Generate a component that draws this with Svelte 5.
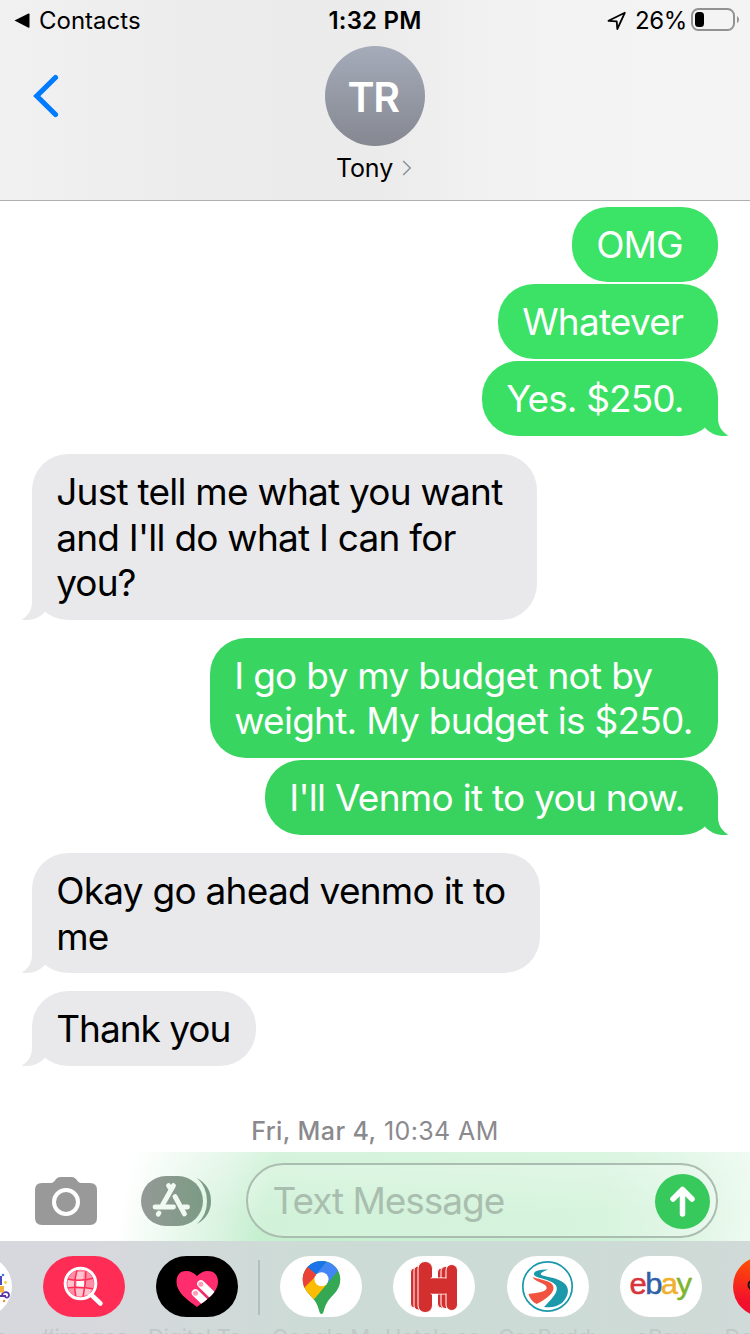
<script lang="ts">
    type Line = { text: string; tracking: number };
    type Message = { from: "me" | "them"; width: number; color?: string; last: boolean; lines: Line[] };

    const messages: Message[] = [
        { from: "me", width: 146, color: "#3be366", last: false, lines: [{ text: "OMG", tracking: -0.9 }] },
        { from: "me", width: 220, color: "#3be265", last: false, lines: [{ text: "Whatever", tracking: -0.8 }] },
        { from: "me", width: 236, color: "#3ae064", last: true, lines: [{ text: "Yes. $250.", tracking: -0.9 }] },
        {
            from: "them",
            width: 505,
            last: true,
            lines: [
                { text: "Just tell me what you want", tracking: -0.76 },
                { text: "and I'll do what I can for", tracking: -0.76 },
                { text: "you?", tracking: -0.9 },
            ],
        },
        {
            from: "me",
            width: 508,
            color: "#38d660",
            last: false,
            lines: [
                { text: "I go by my budget not by", tracking: -0.7 },
                { text: "weight. My budget is $250.", tracking: -0.73 },
            ],
        },
        { from: "me", width: 453, color: "#38d25e", last: true, lines: [{ text: "I'll Venmo it to you now.", tracking: -0.72 }] },
        {
            from: "them",
            width: 508,
            last: true,
            lines: [
                { text: "Okay go ahead venmo it to", tracking: -0.74 },
                { text: "me", tracking: -0.9 },
            ],
        },
        { from: "them", width: 224, last: true, lines: [{ text: "Thank you", tracking: -1.02 }] },
    ];

    const recentApps = [
        { id: "party", label: "Games" },
        { id: "images", label: "#images" },
        { id: "touch", label: "Digital To..." },
    ];

    const apps = [
        { id: "maps", label: "Google M..." },
        { id: "hotels", label: "Hotels.co..." },
        { id: "gas", label: "GasBuddy" },
        { id: "ebay", label: "eBay" },
        { id: "red", label: "DoorDash" },
    ];
</script>

{#snippet appIcon(id: string)}
    <svg viewBox="0 0 82 61" width="82" height="61">
        {#if id === "party"}
            <rect width="82" height="61" rx="30.5" fill="#fff" />
            <path d="M66 40h10M72 40c0-5 7-5 7-1s-5 3-4 0" fill="none" stroke="#5b35a8" stroke-width="1.800" />
            <rect x="66" y="30" width="8" height="6.500" fill="#f7b23c" />
            <path d="M70 20h2v9h-5v-3h3z" fill="#4a49c0" />
            <circle cx="73" cy="19" r="1.300" fill="#3c7be0" />
            <circle cx="75.500" cy="26.500" r="1.400" fill="#f2d52e" />
            <circle cx="74" cy="45" r="1.200" fill="#f08b2d" />
        {:else if id === "images"}
            <rect width="82" height="61" rx="30.5" fill="#ff2d55" />
            <circle cx="37.500" cy="27.500" r="13.500" fill="#ff8fa6" />
            <path d="M33 16h8l-1 8h-8zM25 24h7v8h-7zM41 32h8l-3 7h-6zM32 33h8v7h-7z" fill="#ffc4cf" />
            <rect x="33.500" y="24" width="7.500" height="7.500" fill="#fff" />
            <path d="M24 23q14 3 27-1M23 32q14-2 28 1M34 14q-4 14-1 27M43 14q0 14-3 27" fill="none" stroke="#ff2d55" stroke-width="1.500" />
            <circle cx="37.500" cy="27.500" r="15.300" fill="none" stroke="#fff" stroke-width="3" />
            <path d="M48.500 39l9 8.500" stroke="#fff" stroke-width="4.500" stroke-linecap="round" />
        {:else if id === "touch"}
            <rect width="82" height="61" rx="30.5" fill="#000" />
            <clipPath id="heart">
                <path d="M41 51C35 46 20.500 38 20.500 25.500C20.500 18 25 15 30 15c5 0 8 2 11 5c3-3 6-5 11-5c5 0 10 3 10 10.500C62 38 47 46 41 51z" />
            </clipPath>
            <g clip-path="url(#heart)">
                <rect width="82" height="61" fill="#ff2d6e" />
                <g stroke="#fff" stroke-width="7.600" stroke-linecap="round">
                    <path d="M60 42.500L45 28" />
                    <path d="M52 49L39.500 37" />
                </g>
                <path d="M45.500 36L52 42.500" stroke="#c2315f" stroke-width="1" />
                <circle cx="44.800" cy="28.300" r="2.500" fill="#ff9cb8" />
                <circle cx="39.500" cy="37.300" r="2.500" fill="#ff9cb8" />
            </g>
        {:else if id === "maps"}
            <rect width="82" height="61" rx="30.5" fill="#fff" />
            <clipPath id="pin">
                <path d="M41.500 5C52 5 60.300 13 60.300 23.500C60.300 34 52.500 39 48 45C45.500 48.500 44 54 43.300 56.500Q41.500 59.500 39.700 56.500C39 54 37.500 48.500 35 45C30.500 39 22.700 34 22.700 23.500C22.700 13 31 5 41.500 5z" />
            </clipPath>
            <g clip-path="url(#pin)">
                <rect width="82" height="61" fill="#34a853" />
                <path d="M20 0H48V4L36 19 27 11z" fill="#1a73e8" />
                <path d="M49 3L35.500 19 46 29 62 10V0z" fill="#4285f4" />
                <path d="M27 10.500L37 19 23 36 15 30z" fill="#ea4335" />
                <path d="M36 20L47 28 33 44.500 22 34z" fill="#fbbc04" />
            </g>
            <circle cx="41.500" cy="23.300" r="7" fill="#fff" />
        {:else if id === "hotels"}
            <rect width="82" height="61" rx="30.5" fill="#fff" />
            <g fill="#d32f2f" stroke="#fff" stroke-width="1">
                <rect x="17.500" y="12" width="9" height="40" rx="4" />
                <rect x="21" y="10" width="10" height="44" rx="4.500" />
                <rect x="44.500" y="12" width="8" height="40" rx="4" />
                <rect x="48" y="10.500" width="9" height="42" rx="4.500" />
                <rect x="25" y="5.500" width="14.500" height="51" rx="7" />
                <path d="M38 22H56V38H38z" />
                <rect x="53" y="8.500" width="11.500" height="46" rx="5.700" />
            </g>
            <path d="M36 22.500h20v15H36z" fill="#d32f2f" />
        {:else if id === "gas"}
            <rect width="82" height="61" rx="30.5" fill="#fff" />
            <circle cx="40.500" cy="30.500" r="24.700" fill="#fff" stroke="#1b99ab" stroke-width="1.700" />
            <path d="M41 13.500c-9-.5-15 2-14 5c1 4 17 4 22 11c3 6-3 12-12 21.500c8 1 13-.5 18-4c7-7 8-15 2-20c-7-6-21-6-23-8.500c-1-2 3-3 7-5z" fill="#1b99ab" />
            <path d="M25.500 21c3 6 16 6 14 12c-2 3-10 4-18 5c1 4 4 8 8 10c8-4 17-10 17-16c0-8-14-8-21-11z" fill="#f05340" />
        {:else if id === "ebay"}
            <rect width="82" height="61" rx="30.5" fill="#fff" />
            <text class="ebay" x="9.500" y="37.500" textLength="61" lengthAdjust="spacingAndGlyphs"><tspan class="e">e</tspan><tspan class="b">b</tspan><tspan class="a">a</tspan><tspan class="y">y</tspan></text>
        {:else}
            <defs>
                <linearGradient id="redFill" x1="0.2" y1="0" x2="0" y2="1">
                    <stop offset="0" stop-color="#ff5500" />
                    <stop offset="0.700" stop-color="#f3122a" />
                    <stop offset="1" stop-color="#ee0a35" />
                </linearGradient>
            </defs>
            <rect width="82" height="61" rx="30.5" fill="url(#redFill)" />
            <circle cx="20" cy="29" r="4.500" fill="none" stroke="#161616" stroke-width="2" />
        {/if}
    </svg>
{/snippet}

<div class="screen">
    <header>
        <div class="status">
            <div class="back-to">
                <svg width="17" height="16" viewBox="0 0 17 16"><path d="M.5 7.600L14.500 .6Q15.500 .3 15.500 1.300V14Q15.500 15 14.500 14.700z" /></svg>
                <span class="contacts">Contacts</span>
            </div>
            <div class="time">1:32 PM</div>
            <div class="indicators">
                <svg width="20" height="20" viewBox="0 0 20 20"><path d="M1.500 9.800L17.800 1.800 10.300 18 9.700 10.300z" fill="none" stroke="#000" stroke-width="1.800" stroke-linejoin="round" /></svg>
                <span class="percent">26%</span>
                <svg class="battery" width="49" height="23" viewBox="0 0 49 23">
                    <rect x="1" y="1" width="42" height="21" rx="6.500" fill="none" stroke="#929292" stroke-width="2" />
                    <rect x="4" y="4" width="9" height="15" rx="3.500" />
                    <path d="M46 8q2 1 2 3.500t-2 3.500z" fill="#929292" />
                </svg>
            </div>
        </div>
        <div class="nav">
            <button class="back" type="button" aria-label="Back">
                <svg width="28" height="44" viewBox="0 0 28 44"><path d="M23.500 3.500L4.800 22l18.700 18.500" fill="none" stroke="#007aff" stroke-width="5.200" stroke-linecap="round" /></svg>
            </button>
            <div class="contact">
                <div class="avatar">TR</div>
                <div class="name">
                    <span>Tony</span>
                    <svg width="10" height="16" viewBox="0 0 10 16"><path d="M1.200 1l7 7-7 7" fill="none" stroke="#8b95a1" stroke-width="1.600" /></svg>
                </div>
            </div>
        </div>
    </header>

    <main>
        {#each messages as message}
            <div
                class="bubble {message.from}"
                class:last={message.last}
                class:multiline={message.lines.length > 1}
                style="width: {message.width}px; --bubble: {message.color ?? '#e9e9eb'}"
            >
                {#each message.lines as line}
                    <div class="line" style="letter-spacing: {line.tracking}px">{line.text}</div>
                {/each}
                {#if message.last}
                    <svg class="tail" width="24" height="38" viewBox="0 0 24 38"><path d="M13 0V20C13 28 17 34 23.500 37.600Q10 40 0 30z" /></svg>
                {/if}
            </div>
        {/each}
        <div class="date"><b>Fri, Mar 4,</b> <span>10:34 AM</span></div>
    </main>

    <div class="composer">
        <svg class="camera" width="62" height="49" viewBox="0 0 62 49">
            <path d="M7 6H16Q18 6 19.500 4Q22 0 25.500 0H36.500Q40 0 42.500 4Q44 6 46 6H55Q62 6 62 13V41Q62 48 55 48H7Q0 48 0 41V13Q0 6 7 6z" fill="#999" />
            <circle cx="31" cy="25" r="12" fill="none" stroke="#fff" stroke-width="4" />
        </svg>
        <svg class="store" width="71" height="50" viewBox="0 0 71 50">
            <defs>
                <linearGradient id="storeFill"><stop offset="0" stop-color="#949996" /><stop offset="1" stop-color="#7c9b84" /></linearGradient>
            </defs>
            <rect width="62" height="50" rx="25" fill="url(#storeFill)" />
            <path d="M56 2Q70 10 70 25T56 48Q66 39 66 25T56 2z" fill="#7c9b84" />
            <g fill="none" stroke="#f0faf2" stroke-width="4.800" stroke-linecap="round">
                <path d="M32.500 9.500L21.500 29M27.500 9.500l2.500 4" />
                <path d="M14 31H32.500M42.500 31h4" />
                <path d="M34 20.500L43.500 38" />
                <path d="M18 37l-.8 1.200" />
            </g>
        </svg>
        <div class="field">
            <span>Text Message</span>
            <button class="send" type="button" aria-label="Send">
                <svg width="55" height="55" viewBox="0 0 55 55"><path d="M27.500 40V16M18 25L27.500 15.500 37 25" fill="none" stroke="#fff" stroke-width="5.500" stroke-linecap="round" stroke-linejoin="round" /></svg>
            </button>
        </div>
    </div>

    <footer>
        {#each recentApps as app}
            <div class="app">
                {@render appIcon(app.id)}
                <span>{app.label}</span>
            </div>
        {/each}
        <div class="divider"></div>
        {#each apps as app}
            <div class="app">
                {@render appIcon(app.id)}
                <span>{app.label}</span>
            </div>
        {/each}
    </footer>
</div>

<style>
    :global(body) {
        margin: 0;
        background: #fff;
    }

    .screen {
        display: flex;
        flex-direction: column;
        width: 750px;
        height: 1334px;
        overflow: hidden;
        background: #fff;
        color: #000;
        font-family: Inter, "Liberation Sans", sans-serif;
    }

    svg {
        display: block;
        flex: none;
    }

    button {
        padding: 0;
        border: 0;
        background: none;
    }

    header {
        box-sizing: border-box;
        flex: none;
        height: 201px;
        border-bottom: 1px solid #b0b0b2;
        background: linear-gradient(90deg, #f1f1f2 0%, #ececec 25%, #ebebeb 50%, #f2f2f2 66%, #f4f4f4 100%);
    }

    .status {
        display: grid;
        grid-template-columns: 1fr auto 1fr;
        align-items: center;
        height: 42px;
        padding: 0 10px 0 14px;
        box-sizing: border-box;
        font-size: 24px;
        line-height: 42px;
    }

    .back-to {
        display: flex;
        align-items: center;
        gap: 8px;
    }

    .time {
        padding-right: 4px;
        font-weight: 600;
        letter-spacing: 0.2px;
    }

    .indicators {
        display: flex;
        align-items: center;
        justify-content: flex-end;
    }

    .percent {
        margin: 0 4px 0 8px;
        letter-spacing: -0.4px;
    }

    .battery {
        margin-top: -3px;
    }

    .nav {
        display: grid;
        grid-template-columns: 1fr auto 1fr;
        padding: 4px 32px 0;
    }

    .back {
        justify-self: start;
        align-self: start;
        margin-top: 28px;
    }

    .contact {
        display: flex;
        flex-direction: column;
        align-items: center;
    }

    .avatar {
        box-sizing: border-box;
        width: 100px;
        height: 100px;
        padding-right: 4px;
        border-radius: 50%;
        background: linear-gradient(#a5abb9, #858891);
        color: #fff;
        font-size: 41px;
        font-weight: 600;
        letter-spacing: -1.5px;
        line-height: 103px;
        text-align: center;
    }

    .name {
        display: flex;
        align-items: center;
        gap: 9px;
        height: 43px;
        margin-left: -2px;
        font-size: 25px;
        letter-spacing: -0.1px;
    }

    main {
        display: flex;
        flex: none;
        flex-direction: column;
        box-sizing: border-box;
        height: 951px;
        padding: 6px 32px 0;
    }

    .bubble {
        position: relative;
        box-sizing: border-box;
        flex: none;
        margin-bottom: 2.4px;
        padding: 14.6px 24.2px;
        border-radius: 36px;
        background: var(--bubble);
        font-size: 37px;
        line-height: 45.5px;
        white-space: nowrap;
    }

    .bubble.multiline {
        padding-top: 15.2px;
        padding-bottom: 13.9px;
    }

    .bubble.last {
        margin-bottom: 18.1px;
    }

    .me {
        align-self: flex-end;
        color: #fff;
    }

    .them {
        align-self: flex-start;
    }

    .tail {
        position: absolute;
        right: -11px;
        bottom: 0;
        fill: var(--bubble);
    }

    .them .tail {
        right: auto;
        left: -11px;
        transform: scaleX(-1);
    }

    .date {
        margin-top: 31px;
        color: #8a8a8e;
        font-size: 25px;
        line-height: 32px;
        letter-spacing: 0.4px;
        text-align: center;
    }

    .date b {
        font-weight: 500;
    }

    .composer {
        display: flex;
        flex: none;
        align-items: center;
        box-sizing: border-box;
        height: 89px;
        padding: 0 32px 0 35px;
        background:
            linear-gradient(rgba(255, 255, 255, 0.3), rgba(255, 255, 255, 0) 70%),
            linear-gradient(100deg, #fff 17%, #d8f3df 31%, #c5efcf 36%, #ccf1d5 80%, #d8f4df 89%, #eefaf1 100%);
    }

    .camera {
        margin-top: 9px;
    }

    .store {
        margin: 9px 0 0 44px;
    }

    .field {
        display: flex;
        flex: 1;
        align-items: center;
        justify-content: space-between;
        box-sizing: border-box;
        height: 75px;
        margin: 8px 0 0 34px;
        padding: 0 6px 0 24.5px;
        border: 2px solid #abbdb0;
        border-radius: 38px;
        background: rgba(255, 255, 255, 0.22);
        color: #a9beae;
        font-size: 37px;
        letter-spacing: -1.05px;
    }

    .send {
        width: 55px;
        height: 55px;
        margin-top: 2px;
        border-radius: 50%;
        background: #38c95c;
    }

    footer {
        display: flex;
        flex: none;
        box-sizing: border-box;
        height: 93px;
        margin-left: -70px;
        padding-top: 15px;
        overflow: hidden;
        background: linear-gradient(90deg, #d7d8dd 20%, #cddbd6 45%, #ccdbd5 70%, #d0dad8 100%);
    }

    .app {
        display: flex;
        flex: none;
        flex-direction: column;
        align-items: center;
        width: 82px;
        margin-right: 31.2px;
    }

    .app span {
        width: max-content;
        max-width: 99px;
        margin-top: 6px;
        overflow: hidden;
        color: #c0c9c8;
        font-size: 22px;
        line-height: 28px;
        letter-spacing: -0.3px;
        white-space: nowrap;
    }

    .divider {
        flex: none;
        width: 2px;
        height: 55px;
        margin: 4px 20px 0 -11.3px;
        background: #b3bfbc;
    }

    .ebay {
        font-family: "Liberation Sans", sans-serif;
        font-size: 30px;
        letter-spacing: -1.5px;
        stroke-width: 0.5px;
    }

    .e {
        fill: #d8343c;
        stroke: #d8343c;
    }

    .b {
        fill: #2f5fa8;
        stroke: #2f5fa8;
    }

    .a {
        fill: #f0b02e;
        stroke: #f0b02e;
    }

    .y {
        fill: #7fb42d;
        stroke: #7fb42d;
    }
</style>
